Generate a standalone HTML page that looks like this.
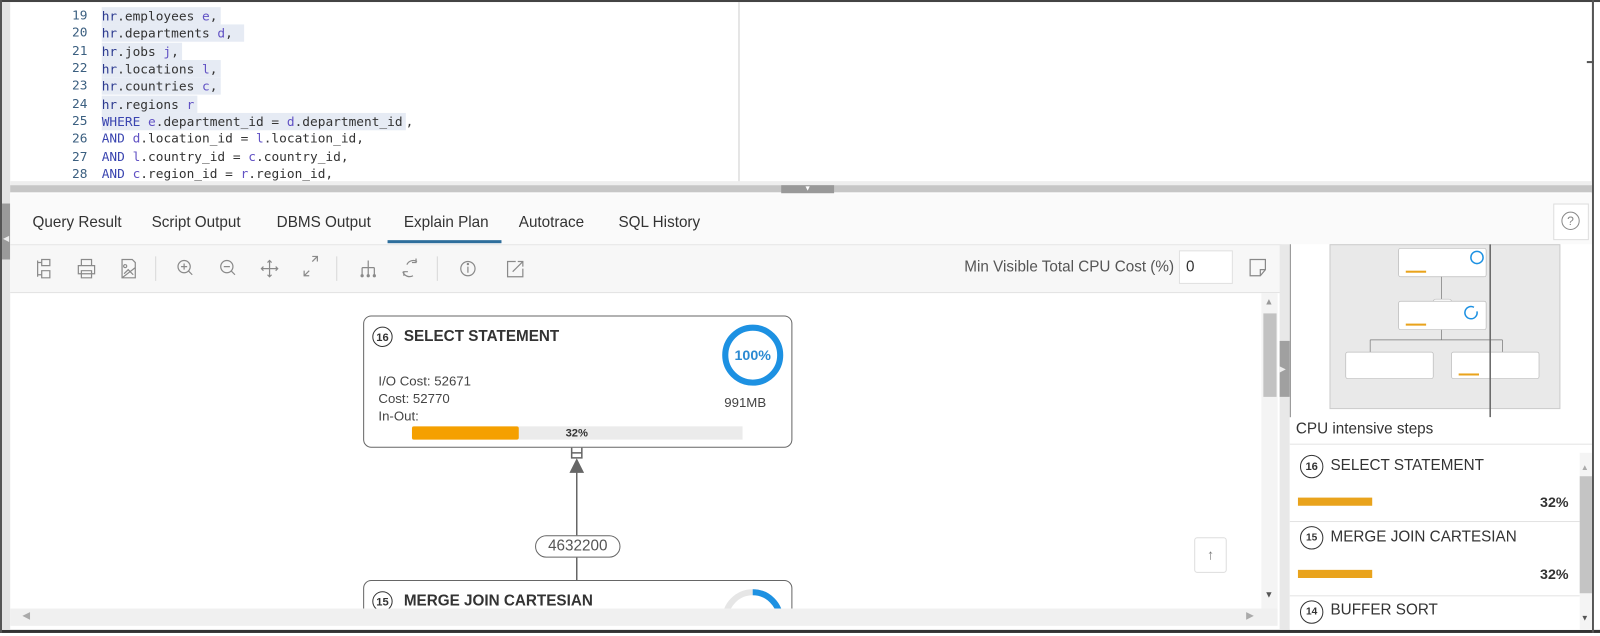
<!DOCTYPE html>
<html><head><meta charset="utf-8"><style>
html,body{margin:0;padding:0;width:1600px;height:636px;overflow:hidden;background:#fff}
#s{position:absolute;left:0;top:0;width:1573px;height:625px;transform:scale(1.0172,1.0176);transform-origin:0 0;font-family:"Liberation Sans",sans-serif;color:#333}
.a{position:absolute}
.code{font-family:"DejaVu Sans Mono","Liberation Mono",monospace;font-size:12.6px;white-space:pre}
.ln{position:absolute;left:40px;width:46px;text-align:right;color:#3b5f80}
.cl{position:absolute;left:100px;color:#333}
.sel{background:#e6ebf4;display:inline-block;line-height:17px;padding-right:3px}
.k{color:#3a45b0}.v{color:#6152c4}.h{color:#2c3a8f}
.tab{position:absolute;top:210px;font-size:15px;color:#333}
.num{position:absolute;width:20px;height:20px;border:1.5px solid #333;border-radius:50%;font-size:11px;font-weight:bold;text-align:center;line-height:20px;box-sizing:border-box}
</style></head><body><div id="s">
<div class="a" style="left:0;top:0;width:1573px;height:2px;background:#444"></div>
<div class="a" style="left:0;top:619px;width:1573px;height:3px;background:#333"></div>
<div class="a" style="left:0;top:0;width:2px;height:622px;background:#555"></div>
<div class="a" style="left:2px;top:2px;width:8px;height:617px;background:#e4e4e4"></div>
<div class="a" style="left:2px;top:200px;width:8px;height:55px;background:#9a9a9a"></div>
<div class="a" style="left:3px;top:230px;font-size:8px;color:#eee">◀</div>
<div class="a" style="left:1565px;top:0;width:2px;height:622px;background:#555"></div>
<div class="a" style="left:1560px;top:60px;width:7px;height:2px;background:#555"></div>

<div class="a code" style="left:0;top:0;width:1560px;height:180px">
<div class="ln" style="top:7px">19</div><div class="cl" style="top:7px"><span class="sel"><span class="h">hr</span>.employees <span class="v">e</span>,</span></div>
<div class="ln" style="top:24px">20</div><div class="cl" style="top:24px"><span class="sel"><span class="h">hr</span>.departments <span class="v">d</span>, </span></div>
<div class="ln" style="top:42px">21</div><div class="cl" style="top:42px"><span class="sel"><span class="h">hr</span>.jobs <span class="v">j</span>,</span></div>
<div class="ln" style="top:59px">22</div><div class="cl" style="top:59px"><span class="sel"><span class="h">hr</span>.locations <span class="v">l</span>,</span></div>
<div class="ln" style="top:76px">23</div><div class="cl" style="top:76px"><span class="sel"><span class="h">hr</span>.countries <span class="v">c</span>,</span></div>
<div class="ln" style="top:94px">24</div><div class="cl" style="top:94px"><span class="sel"><span class="h">hr</span>.regions <span class="v">r</span></span></div>
<div class="ln" style="top:111px">25</div><div class="cl" style="top:111px"><span class="sel"><span class="k">WHERE</span> <span class="v">e</span>.department_id = <span class="v">d</span>.department_id</span>,</div>
<div class="ln" style="top:128px">26</div><div class="cl" style="top:128px"><span class="k">AND</span> <span class="v">d</span>.location_id = <span class="v">l</span>.location_id,</div>
<div class="ln" style="top:146px">27</div><div class="cl" style="top:146px"><span class="k">AND</span> <span class="v">l</span>.country_id = <span class="v">c</span>.country_id,</div>
<div class="ln" style="top:163px">28</div><div class="cl" style="top:163px"><span class="k">AND</span> <span class="v">c</span>.region_id = <span class="v">r</span>.region_id,</div>
</div>
<div class="a" style="left:726px;top:2px;width:1px;height:178px;background:#ccc"></div>
<div class="a" style="left:10px;top:178px;width:1555px;height:4px;background:#eee"></div>
<div class="a" style="left:10px;top:182px;width:1555px;height:7px;background:#c6c6c6"></div>
<div class="a" style="left:768px;top:182px;width:52px;height:8px;background:#999;color:#fff;font-size:7px;text-align:center;line-height:8px">▼</div>

<div class="a" style="left:10px;top:190px;width:1555px;height:50px;background:#fafafa"></div>
<div class="tab" style="left:32px">Query Result</div>
<div class="tab" style="left:149px">Script Output</div>
<div class="tab" style="left:272px">DBMS Output</div>
<div class="tab" style="left:397px">Explain Plan</div>
<div class="tab" style="left:510px">Autotrace</div>
<div class="tab" style="left:608px">SQL History</div>
<div class="a" style="left:381px;top:236px;width:112px;height:3px;background:#2e6e9c"></div>
<div class="a" style="left:1527px;top:200px;width:35px;height:36px;border:1px solid #ddd;background:#fff;box-sizing:border-box"></div>
<div class="a" style="left:1535px;top:208px;width:18px;height:18px;border:1.2px solid #888;border-radius:50%;box-sizing:border-box;font-size:12px;color:#888;text-align:center;line-height:16px">?</div>

<div class="a" style="left:10px;top:240px;width:1250px;height:48px;background:#f7f7f7;border-top:1px solid #e6e6e6;border-bottom:1px solid #e3e3e3;box-sizing:border-box"></div>
<svg class="a" style="left:10px;top:240px" width="1250" height="48" fill="none" stroke="#8a8a8a" stroke-width="1.2">
<path d="M27 16v16M27 18h4M27 30h4M31 15h8v6h-8zM31 26h8v7h-8z"/>
<path d="M70 15h10v6H70zM67 21h16v8H67zM70 26h10v7H70z"/>
<path d="M110 15h10l3 3v15h-13zM112 29l4-4 5 5M113 20a1.5 1.5 0 1 0 .1 0M110 33l13-10"/>
<line x1="143" y1="12" x2="143" y2="36" stroke="#ddd"/>
<circle cx="171" cy="22" r="6"/><path d="M175 26l4 4M168 22h6M171 19v6"/>
<circle cx="213" cy="22" r="6"/><path d="M217 26l4 4M210 22h6"/>
<path d="M255 16v16M247 24h16M253 18l2-2 2 2M253 30l2 2 2-2M249 22l-2 2 2 2M261 22l2 2-2 2"/>
<path d="M289 26v5h5M289 31l5-5M302 17v-5h-5M302 12l-5 5"/>
<line x1="321" y1="12" x2="321" y2="36" stroke="#ddd"/>
<path d="M352 16v14M346 23h12M346 23v7M358 23v7"/><circle cx="346" cy="31" r="1" fill="#8a8a8a"/><circle cx="352" cy="31" r="1" fill="#8a8a8a"/><circle cx="358" cy="31" r="1" fill="#8a8a8a"/>
<path d="M400 17a7 7 0 0 0-10 3M386 27a7 7 0 0 0 10 4M399 14v4h-4M387 31v-4h4"/>
<line x1="420" y1="12" x2="420" y2="36" stroke="#ddd"/>
<circle cx="450" cy="24" r="7"/><path d="M450 22v6"/><circle cx="450" cy="19.5" r=".6" fill="#8a8a8a"/>
<path d="M497 17h-8v15h15v-8M494 27l10-10M499 17h5v5"/>
</svg>
<div class="a" style="left:948px;top:254px;font-size:15px;color:#555">Min Visible Total CPU Cost (%)</div>
<div class="a" style="left:1159px;top:246px;width:53px;height:33px;background:#fff;border:1px solid #e0e0e0;box-sizing:border-box;font-size:15px;padding:7px 6px">0</div>
<svg class="a" style="left:1226px;top:252px" width="22" height="22" fill="none" stroke="#888" stroke-width="1.2"><path d="M3 3h15v10l-5 6H3zM13 19v-6h5"/></svg>

<!-- diagram (clipped) -->
<div class="a" style="left:10px;top:288px;width:1230px;height:310px;overflow:hidden">
<div class="a" style="left:347px;top:22px;width:422px;height:130px;border:1.5px solid #666;border-radius:8px;box-sizing:border-box;background:#fff"></div>
<div class="num" style="left:356px;top:33px">16</div>
<div class="a" style="left:387px;top:34px;font-size:15px;font-weight:bold;color:#333">SELECT STATEMENT</div>
<svg class="a" style="left:696px;top:27px" width="70" height="70"><circle cx="34" cy="34" r="27" fill="none" stroke="#1d91e2" stroke-width="6"/><text x="34" y="39" text-anchor="middle" font-family="Liberation Sans" font-size="14" font-weight="bold" fill="#2b8ad2">100%</text></svg>
<div class="a" style="left:702px;top:100px;font-size:13px;color:#444">991MB</div>
<div class="a" style="left:362px;top:78px;font-size:13px;color:#444;line-height:17px">I/O Cost: 52671<br>Cost: 52770<br>In-Out:</div>
<div class="a" style="left:395px;top:131px;width:325px;height:13px;background:#ebebeb"></div>
<div class="a" style="left:395px;top:131px;width:105px;height:13px;background:#f5a000;border-radius:2px"></div>
<div class="a" style="left:546px;top:131px;font-size:11px;font-weight:bold;color:#333;line-height:14px">32%</div>
<svg class="a" style="left:530px;top:150px" width="60" height="135" fill="none" stroke="#666" stroke-width="1.5"><path d="M22 2v10h10V2M22 7h10"/><path d="M27 14l-6 12h12z" fill="#666"/><path d="M27 26v62M27 110v24"/></svg>
<div class="a" style="left:516px;top:238px;width:84px;height:22px;border:1.5px solid #666;border-radius:11px;box-sizing:border-box;text-align:center;font-size:15px;color:#555;line-height:19px;background:#fff">4632200</div>
<div class="a" style="left:347px;top:282px;width:422px;height:60px;border:1.5px solid #666;border-radius:8px;box-sizing:border-box;background:#fff"></div>
<div class="num" style="left:356px;top:293px">15</div>
<div class="a" style="left:387px;top:294px;font-size:15px;font-weight:bold;color:#333">MERGE JOIN CARTESIAN</div>
<svg class="a" style="left:696px;top:287px" width="70" height="30"><circle cx="34" cy="34" r="27" fill="none" stroke="#e6e6e6" stroke-width="6"/><path d="M34 7a27 27 0 0 1 27 27" fill="none" stroke="#1d91e2" stroke-width="6"/></svg>
<div class="a" style="left:1164px;top:240px;width:32px;height:35px;border:1px solid #ddd;border-radius:3px;background:#fff;box-sizing:border-box;text-align:center;font-size:14px;color:#777;line-height:32px">↑</div>
</div>
<div class="a" style="left:10px;top:598px;width:1246px;height:17px;background:#f0f0f0"></div>
<div class="a" style="left:22px;top:600px;font-size:10px;color:#aaa">◀</div>
<div class="a" style="left:1225px;top:600px;font-size:10px;color:#aaa">▶</div>
<div class="a" style="left:1240px;top:288px;width:16px;height:310px;background:#f4f4f4"></div>
<div class="a" style="left:1242px;top:308px;width:13px;height:82px;background:#c2c2c2"></div>
<div class="a" style="left:1243px;top:291px;font-size:9px;color:#999">▲</div>
<div class="a" style="left:1243px;top:579px;font-size:9px;color:#555">▼</div>

<div class="a" style="left:1258px;top:240px;width:10px;height:379px;background:#e8e8e8"></div>
<div class="a" style="left:1258px;top:335px;width:10px;height:55px;background:#a0a0a0;color:#eee;font-size:8px;line-height:55px">▶</div>
<div class="a" style="left:1268px;top:240px;width:297px;height:379px;background:#fff"></div>
<div class="a" style="left:1307px;top:240px;width:227px;height:162px;background:#e9e9e9;border:1px solid #ccc;box-sizing:border-box"></div>
<svg class="a" style="left:1307px;top:240px" width="227" height="170" fill="#fff" stroke="#bbb" stroke-width=".7">
<rect x="68" y="4" width="86" height="28" rx="2"/><rect x="75" y="26" width="20" height="2" fill="#e9a31c" stroke="none"/><circle cx="145" cy="13" r="6" fill="none" stroke="#1d91e2" stroke-width="1.5"/>
<path d="M110 32v23M110 64v4" stroke="#777"/><rect x="102" y="54" width="18" height="5" rx="2.5"/>
<rect x="68" y="56" width="86" height="28" rx="2"/><rect x="75" y="78" width="20" height="2" fill="#e9a31c" stroke="none"/><path d="M145 66a6 6 0 1 1-3-4" fill="none" stroke="#1d91e2" stroke-width="1.5"/>
<path d="M110 84v10M40 94h130M40 94v18M170 94v18" stroke="#777"/>
<rect x="16" y="106" width="86" height="26" rx="2"/><rect x="120" y="106" width="86" height="26" rx="2"/><rect x="127" y="127" width="20" height="2" fill="#e9a31c" stroke="none"/>
<path d="M158 0v170" stroke="#666" stroke-width="1.5"/>
</svg>
<div class="a" style="left:1268px;top:240px;width:1px;height:170px;background:#888"></div>
<div class="a" style="left:1274px;top:413px;font-size:15px;color:#333">CPU intensive steps</div>
<div class="a" style="left:1268px;top:436px;width:297px;height:1px;background:#e3e3e3"></div>
<div class="num" style="left:1278px;top:447px;width:23px;height:23px;line-height:22px;border-width:1.2px">16</div>
<div class="a" style="left:1308px;top:449px;font-size:15px;color:#333">SELECT STATEMENT</div>
<div class="a" style="left:1276px;top:489px;width:73px;height:8px;background:#e9a31c"></div>
<div class="a" style="left:1514px;top:485px;font-size:14px;font-weight:bold;color:#333">32%</div>
<div class="a" style="left:1268px;top:512px;width:285px;height:1px;background:#e3e3e3"></div>
<div class="num" style="left:1278px;top:517px;width:23px;height:23px;line-height:22px;border-width:1.2px;font-size:10px">15</div>
<div class="a" style="left:1308px;top:519px;font-size:15px;color:#333">MERGE JOIN CARTESIAN</div>
<div class="a" style="left:1276px;top:560px;width:73px;height:8px;background:#e9a31c"></div>
<div class="a" style="left:1514px;top:556px;font-size:14px;font-weight:bold;color:#333">32%</div>
<div class="a" style="left:1268px;top:585px;width:285px;height:1px;background:#e3e3e3"></div>
<div class="num" style="left:1278px;top:590px;width:23px;height:23px;line-height:22px;border-width:1.2px;font-size:10px">14</div>
<div class="a" style="left:1308px;top:591px;font-size:15px;color:#333">BUFFER SORT</div>
<div class="a" style="left:1553px;top:445px;width:12px;height:174px;background:#f4f4f4"></div>
<div class="a" style="left:1553px;top:468px;width:12px;height:115px;background:#c4c4c4"></div>
<div class="a" style="left:1554px;top:455px;font-size:8px;color:#aaa">▲</div>
<div class="a" style="left:1554px;top:603px;font-size:8px;color:#555">▼</div>
</div></body></html>
